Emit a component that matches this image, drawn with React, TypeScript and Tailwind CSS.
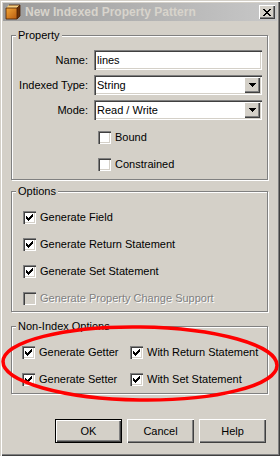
import type { ReactNode } from "react";

const raised =
	"shadow-[inset_1px_1px_0_#fff,inset_-1px_-1px_0_#404040,inset_-2px_-2px_0_#808080]";
const sunken =
	"shadow-[inset_1px_1px_0_#808080,inset_2px_2px_0_#404040,inset_-1px_-1px_0_#fff,inset_-2px_-2px_0_#d4d0c8]";
const etched =
	"border border-[#808080] shadow-[inset_1px_1px_0_#fff,1px_1px_0_#fff]";

// classic 7x7 tick, one 1x3 column per x
const tickTops = [5, 6, 7, 6, 5, 4, 3];

function CheckBox({
	checked,
	disabled,
}: {
	checked?: boolean;
	disabled?: boolean;
}) {
	return (
		<span
			className={`block w-[13px] h-[13px] shrink-0 ${sunken} ${
				disabled ? "bg-[#d4d0c8]" : "bg-white"
			}`}
		>
			{checked && (
				<svg width="13" height="13" shapeRendering="crispEdges">
					{tickTops.map((top, i) => (
						<rect key={i} x={3 + i} y={top} width="1" height="3" fill="#000" />
					))}
				</svg>
			)}
		</span>
	);
}

function CheckRow({
	label,
	checked,
	disabled,
	className = "",
}: {
	label: string;
	checked?: boolean;
	disabled?: boolean;
	className?: string;
}) {
	return (
		<div className={`flex items-center h-[13px] gap-[4px] ${className}`}>
			<CheckBox checked={checked} disabled={disabled} />
			<span
				className={`leading-[13px] whitespace-nowrap ${
					disabled ? "text-[#808080] [text-shadow:1px_1px_0_#fff]" : ""
				}`}
			>
				{label}
			</span>
		</div>
	);
}

function GroupBox({
	title,
	className = "",
	children,
}: {
	title: string;
	className?: string;
	children: ReactNode;
}) {
	return (
		<fieldset className={`w-[257px] ${etched} ${className}`}>
			<legend className="ml-[4px] px-[2px] bg-[#d4d0c8] leading-[13px]">
				{title}
			</legend>
			{children}
		</fieldset>
	);
}

function DropArrow() {
	return (
		<span
			className={`absolute right-[2px] top-[2px] w-[16px] h-[16px] flex items-center justify-center bg-[#d4d0c8] ${raised}`}
		>
			<svg width="7" height="4" shapeRendering="crispEdges">
				<rect x="0" y="0" width="7" height="1" fill="#000" />
				<rect x="1" y="1" width="5" height="1" fill="#000" />
				<rect x="2" y="2" width="3" height="1" fill="#000" />
				<rect x="3" y="3" width="1" height="1" fill="#000" />
			</svg>
		</span>
	);
}

function FieldRow({
	label,
	value,
	combo,
}: {
	label: string;
	value: string;
	combo?: boolean;
}) {
	return (
		<div className="flex items-center gap-[6px] h-[20px]">
			<span className="w-[76px] text-right whitespace-nowrap">{label}</span>
			<div
				className={`relative w-[168px] h-[20px] bg-white flex items-center pl-[3px] ${sunken}`}
			>
				{value}
				{combo && <DropArrow />}
			</div>
		</div>
	);
}

function PushButton({ label, isDefault }: { label: string; isDefault?: boolean }) {
	return (
		<button
			type="button"
			className={`w-[67px] h-[24px] bg-[#d4d0c8] text-center ${
				isDefault
					? "shadow-[inset_0_0_0_1px_#000,inset_2px_2px_0_#fff,inset_-2px_-2px_0_#404040,inset_-3px_-3px_0_#808080]"
					: raised
			}`}
		>
			{label}
		</button>
	);
}

function AppIcon() {
	return (
		<svg width="16" height="16" viewBox="0 0 16 16">
			<defs>
				<linearGradient id="face" x1="0" y1="0" x2="1" y2="1">
					<stop offset="0" stopColor="#f4a838" />
					<stop offset="1" stopColor="#b85a10" />
				</linearGradient>
			</defs>
			<polygon points="1,4 4,1 15,1 12,4" fill="#f8d080" />
			<polygon points="12,4 15,1 15,12 12,15" fill="#6b3008" />
			<rect x="1" y="4" width="11" height="11" fill="url(#face)" />
			<path d="M1 4h11v11H1z M12 4l3-3 M12 15l3-3 M4 1h11v11" fill="none" stroke="#4a2004" strokeWidth="0.8" />
		</svg>
	);
}

function CloseGlyph() {
	const rows: [number, number][][] = [
		[[0, 2], [6, 2]],
		[[1, 2], [5, 2]],
		[[2, 4]],
		[[3, 2]],
		[[2, 4]],
		[[1, 2], [5, 2]],
		[[0, 2], [6, 2]],
	];
	return (
		<svg width="8" height="7" shapeRendering="crispEdges">
			{rows.map((segs, y) =>
				segs.map(([x, w]) => (
					<rect key={`${y}-${x}`} x={x} y={y} width={w} height="1" fill="#000" />
				)),
			)}
		</svg>
	);
}

export default function App() {
	return (
		<div
			className={`relative w-[280px] h-[456px] bg-[#d4d0c8] text-black text-[11px] font-['Liberation_Sans',Arial,sans-serif] p-[3px] flex flex-col overflow-hidden shadow-[inset_1px_1px_0_#d4d0c8,inset_2px_2px_0_#fff,inset_-1px_-1px_0_#404040,inset_-2px_-2px_0_#808080]`}
		>
			{/* Title bar */}
			<div className="h-[18px] shrink-0 flex items-center bg-linear-to-r from-[#9c9c9c] to-[#c8c8c8] pl-[2px] pr-[2px]">
				<AppIcon />
				<span className="ml-[4px] text-[12px] font-bold text-[#d8d4cc] whitespace-nowrap">
					New Indexed Property Pattern
				</span>
				<span
					className={`ml-auto w-[16px] h-[14px] flex items-center justify-center bg-[#d4d0c8] ${raised}`}
				>
					<CloseGlyph />
				</span>
			</div>

			{/* Body */}
			<div className="flex flex-col pl-[8px]">
				<GroupBox title="Property" className="mt-[8px] pt-[8px] pb-[8px]">
					<div className="flex flex-col gap-[5px]">
						<FieldRow label="Name:" value="lines" />
						<FieldRow label="Indexed Type:" value="String" combo />
						<FieldRow label="Mode:" value="Read / Write" combo />
					</div>
					<div className="flex flex-col gap-[14px] mt-[11px] pl-[86px]">
						<CheckRow label="Bound" />
						<CheckRow label="Constrained" />
					</div>
				</GroupBox>

				<GroupBox title="Options" className="mt-[5px] pt-[13px] pb-[6px]">
					<div className="flex flex-col gap-[14px] pl-[11px]">
						<CheckRow label="Generate Field" checked />
						<CheckRow label="Generate Return Statement" checked />
						<CheckRow label="Generate Set Statement" checked />
						<CheckRow label="Generate Property Change Support" disabled />
					</div>
				</GroupBox>

				<GroupBox title="Non-Index Options" className="mt-[8px] pt-[13px] pb-[7px]">
					<div className="grid grid-cols-[108px_1fr] gap-y-[14px] pl-[10px]">
						<CheckRow label="Generate Getter" checked />
						<CheckRow label="With Return Statement" checked />
						<CheckRow label="Generate Setter" checked />
						<CheckRow label="With Set Statement" checked />
					</div>
				</GroupBox>

				<div className="flex gap-[5px] mt-[25px] ml-[44px]">
					<PushButton label="OK" isDefault />
					<PushButton label="Cancel" />
					<PushButton label="Help" />
				</div>
			</div>

			{/* red annotation ring */}
			<svg
				className="absolute left-0 top-0 pointer-events-none"
				width="280"
				height="456"
			>
				<ellipse
					cx="140"
					cy="363.5"
					rx="137"
					ry="36.5"
					fill="none"
					stroke="#ff0000"
					strokeWidth="3.5"
					transform="rotate(0.8 140 363.5)"
				/>
			</svg>
		</div>
	);
}
